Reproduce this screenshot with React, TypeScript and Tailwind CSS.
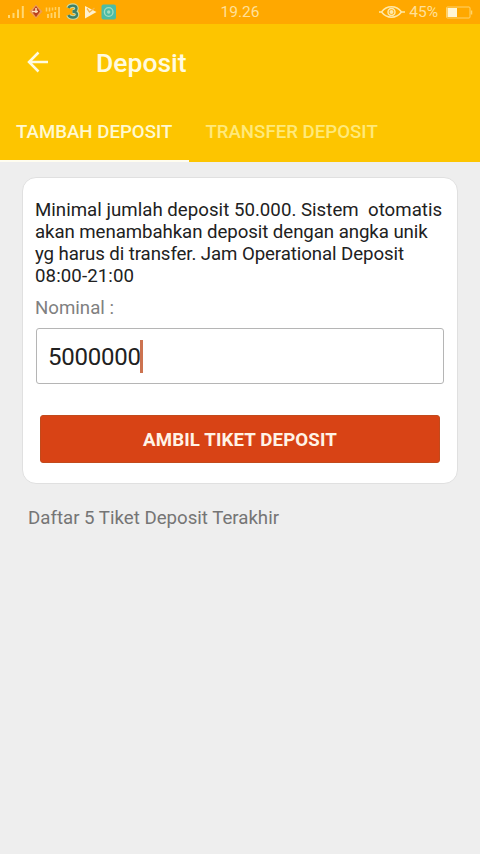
import { useState } from 'react';

const tabs = ['TAMBAH DEPOSIT', 'TRANSFER DEPOSIT'];

export default function App() {
  const [activeTab, setActiveTab] = useState(0);

  return (
    <div className="min-h-screen bg-[#eeeeee] font-['Roboto',sans-serif]">
      <StatusBar />
      <header className="h-[138px] bg-[#fdc500] flex flex-col justify-between">
        <div className="flex items-center h-[76px] pl-[26px]">
          <button aria-label="Kembali" className="mr-[48px]">
            <BackIcon />
          </button>
          <h1 className="text-[26.5px] leading-8 font-medium text-[#fffbe0] pt-0.5">Deposit</h1>
        </div>
        <nav className="flex h-[62px]">
          {tabs.map((tab, i) => (
            <button
              key={tab}
              onClick={() => setActiveTab(i)}
              className={`pl-4 pr-[17px] pt-[3px] text-[18.67px] font-medium whitespace-nowrap border-b-2 ${
                activeTab === i ? 'text-[#fff9d0] border-[#fffdf0]' : 'text-[#ffe97a] border-transparent'
              }`}
            >
              {tab}
            </button>
          ))}
        </nav>
      </header>

      <main className="px-[22px] pt-[15px]">
        <section className="h-[307px] bg-white rounded-[14px] border border-[#e0e0e0] px-3 pt-[21px]">
          <p className="text-[18.67px] leading-[22px] text-[#212121] whitespace-pre">
            <span className="block tracking-[0.02px]">{'Minimal jumlah deposit 50.000. Sistem  otomatis'}</span>
            <span className="block tracking-[-0.07px]">akan menambahkan deposit dengan angka unik</span>
            <span className="block tracking-[-0.09px]">yg harus di transfer. Jam Operational Deposit</span>
            <span className="block tracking-[0.09px]">08:00-21:00</span>
          </p>
          <p className="mt-[10px] text-[18.67px] leading-[22px] text-[#808080]">Nominal :</p>
          <div className="mt-[9px] ml-px h-14 flex items-center rounded-[3px] border border-[#b5b5b5] pl-[11px] mr-px">
            <span className="text-2xl tracking-[-0.25px] text-[#212121] pt-0.5">5000000</span>
            <span className="-ml-px w-[3px] h-[33px] bg-[#cc7350]" />
          </div>
          <button className="mt-[31px] ml-[5px] w-[400px] h-12 rounded-[3px] border border-[#c24a1c] bg-[#d84315] pt-0.5 text-[18.67px] tracking-[0.12px] font-bold text-[#fff3e6]">
            AMBIL TIKET DEPOSIT
          </button>
        </section>
        <p className="mt-[23px] ml-1.5 text-[18.67px] leading-[22px] text-[#757575]">Daftar 5 Tiket Deposit Terakhir</p>
      </main>
    </div>
  );
}

function StatusBar() {
  return (
    <div className="h-6 bg-[#ffa800] flex items-center justify-between pl-[7px] pr-[7px] text-[#ffe09a]">
      <div className="flex-1">
        <StatusIcons />
      </div>
      <span className="text-[15.5px] leading-6">19.26</span>
      <div className="flex-1 flex items-center justify-end">
        <EyeIcon />
        <span className="ml-1 mr-2 text-[15.5px] leading-6">45%</span>
        <BatteryIcon />
      </div>
    </div>
  );
}

function StatusIcons() {
  return (
    <svg width="112" height="24" viewBox="7 0 112 24" fill="none">
      {/* first SIM signal */}
      <path d="M9 18v-3M13.5 18v-5M18 18V9.500M22.800 18V6" stroke="#ffd873" strokeWidth="2" />
      {/* operator logo */}
      <path d="M36 4.500l6.500 7-6.500 7-6.500-7z" fill="#ee9c55" />
      <path d="M36 6l4 5.500-4 5.500-4-5.500z" fill="#b9401c" />
      <path d="M32 11.500h6M36 8v5" stroke="#ffe3b8" strokeWidth="1.500" />
      {/* second SIM signal */}
      <path d="M48 18v-4M51.500 18v-5M55 18v-6M59 18V7" stroke="#ffd46b" strokeWidth="1.800" />
      <path d="M46.500 7.500v4M49.500 7.500v4M52.500 7.500v3M55.500 7v3" stroke="#ffd063" strokeWidth="1.500" />
      {/* Tri logo */}
      <path d="M68.500 8c1-3 8-3.500 8 .500 0 2.500-3 3-4 3 2 0 5 1 4.500 3.500-.800 3.500-7.500 3-8.500 0" stroke="#c9d9a5" strokeWidth="4.600" />
      <path d="M68.500 8c1-3 8-3.500 8 .500 0 2.500-3 3-4 3 2 0 5 1 4.500 3.500-.800 3.500-7.500 3-8.500 0" stroke="#3f8068" strokeWidth="2.400" />
      {/* play mark */}
      <path d="M85 6L96.500 12 85 18.500z" fill="#fff1cf" />
      <path d="M87 8.500l2.500 3.500 5-4" stroke="#f7b64a" strokeWidth="1.300" />
      {/* teal app */}
      <rect x="101.500" y="4.500" width="14.500" height="15" rx="2" fill="#4dbca5" />
      <circle cx="108.700" cy="12" r="4.300" stroke="#a5ddbf" strokeWidth="1.300" />
      <circle cx="108.700" cy="12" r="1.700" fill="#a5ddbf" />
    </svg>
  );
}

function BackIcon() {
  return (
    <svg width="22" height="22" viewBox="0 0 22 22" fill="none" stroke="#fffbe0" strokeWidth="2.500">
      <path d="M22 11H2.500M12.500 1.500L3 11l9.500 9.500" />
    </svg>
  );
}

function EyeIcon() {
  return (
    <svg width="26" height="14" viewBox="0 0 26 14" fill="none" stroke="#ffe9a8" strokeWidth="1.500">
      <path d="M0 7h2.500C5 3.800 8.500 1.800 12.500 1.800S20 3.800 22.500 7C20 10.200 16.500 12.200 12.500 12.200S5 10.200 2.500 7M22.500 7H26" />
      <circle cx="12.500" cy="7" r="3.500" />
      <circle cx="12.500" cy="7" r="1.300" fill="#ffe9a8" />
    </svg>
  );
}

function BatteryIcon() {
  return (
    <svg width="27" height="13" viewBox="0 0 27 13" fill="none">
      <rect x=".500" y="1" width="23.500" height="11" rx="1" stroke="#ffd36b" />
      <rect x="1.500" y="2" width="9.500" height="9" fill="#fff6d5" />
      <path d="M25.500 4.500v4" stroke="#ffd36b" strokeWidth="1.500" />
    </svg>
  );
}
